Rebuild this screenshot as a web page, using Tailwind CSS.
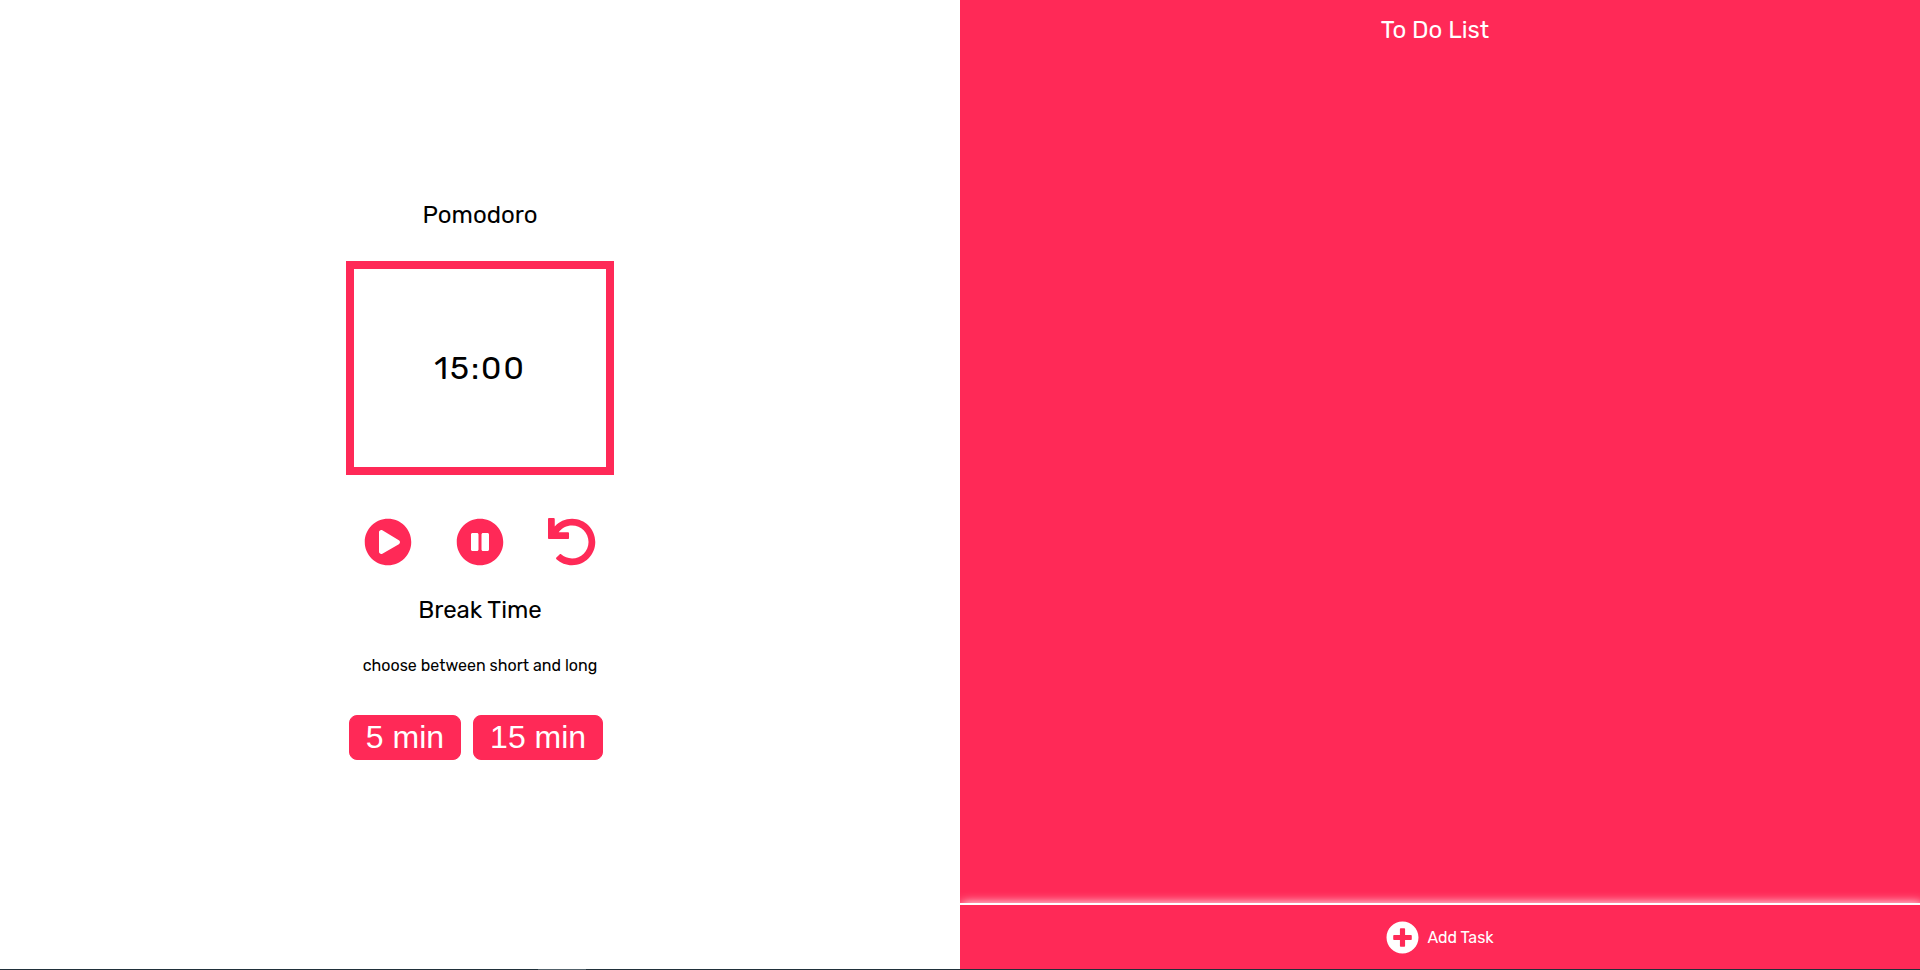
<!DOCTYPE html>
<html lang="en">
<head>
<meta charset="utf-8">
<meta name="viewport" content="width=device-width, initial-scale=1">
<title>Pomodoro</title>
<script src="https://cdn.jsdelivr.net/npm/@tailwindcss/browser@4"></script>
</head>
<body class="flex min-h-screen flex-col bg-white font-['Rubik','Inter',sans-serif] text-black">
  <div class="grid flex-1 grid-cols-2">
    <main class="flex flex-col items-center justify-center pb-2.5">
      <h1 class="text-2xl">Pomodoro</h1>
      <div class="mt-[30px] flex h-[214px] w-[268px] items-center justify-center border-8 border-[#ff2957]">
        <time class="text-[32px] leading-10 tracking-[2px]">15:00</time>
      </div>
      <div class="mt-[43px] flex gap-11 text-[#ff2957]">
        <button type="button" aria-label="Start"><svg class="size-12" viewBox="0 0 512 512" fill="currentColor"><path d="M256 8C119 8 8 119 8 256s111 248 248 248 248-111 248-248S393 8 256 8zm115.7 272l-176 101c-15.8 8.800-35.700-2.500-35.700-21V152c0-18.400 19.800-29.800 35.700-21l176 107c16.400 9.200 16.400 32.900 0 42z"/></svg></button>
        <button type="button" aria-label="Pause"><svg class="size-12" viewBox="0 0 512 512" fill="currentColor"><path d="M256 8C119 8 8 119 8 256s111 248 248 248 248-111 248-248S393 8 256 8zm-16 328c0 8.800-7.200 16-16 16h-48c-8.800 0-16-7.200-16-16V176c0-8.800 7.200-16 16-16h48c8.800 0 16 7.200 16 16v160zm112 0c0 8.800-7.200 16-16 16h-48c-8.800 0-16-7.200-16-16V176c0-8.800 7.200-16 16-16h48c8.800 0 16 7.200 16 16v160z"/></svg></button>
        <button type="button" aria-label="Reset"><svg class="size-12" viewBox="0 0 512 512" fill="currentColor"><path d="M212.333 224.333H12c-6.627 0-12-5.373-12-12V12C0 5.373 5.373 0 12 0h48c6.627 0 12 5.373 12 12v78.112C117.773 39.279 184.260 7.470 258.175 8.007c136.906.994 246.448 111.623 246.157 248.532C504.041 393.258 393.120 504 256.333 504c-64.089 0-122.496-24.313-166.510-64.215-5.099-4.622-5.334-12.554-.467-17.420l33.967-33.967c4.474-4.474 11.662-4.717 16.401-.525C170.760 415.336 211.580 432 256.333 432c97.268 0 176-78.716 176-176 0-97.267-78.716-176-176-176-58.496 0-110.280 28.476-142.274 72.333h98.274c6.627 0 12 5.373 12 12v48c0 6.627-5.373 12-12 12z"/></svg></button>
      </div>
      <h2 class="mt-7 text-2xl">Break Time</h2>
      <p class="mt-7 text-base">choose between short and long</p>
      <div class="mt-[37px] flex gap-3 pr-2 font-['Liberation_Sans',sans-serif] text-[32px] leading-[35px] text-white">
        <button type="button" class="rounded-lg border border-[#ff2957] bg-[#ff2957] px-4 py-1">5 min</button>
        <button type="button" class="rounded-lg border border-[#ff2957] bg-[#ff2957] px-4 py-1">15 min</button>
      </div>
    </main>
    <section class="flex flex-col overflow-hidden bg-[#ff2957] text-white">
      <h2 class="mt-3.5 pr-2.5 text-center text-2xl">To Do List</h2>
      <div class="flex-1"></div>
      <button type="button" class="flex h-[66px] items-center justify-center gap-2 border-t-2 border-white bg-[#ff2957] shadow-[2px_0_10px_white]">
        <svg class="size-[33px]" viewBox="0 0 512 512" fill="currentColor"><path d="M256 8C119 8 8 119 8 256s111 248 248 248 248-111 248-248S393 8 256 8zm144 276c0 6.600-5.400 12-12 12h-92v92c0 6.600-5.400 12-12 12h-56c-6.600 0-12-5.400-12-12v-92h-92c-6.600 0-12-5.400-12-12v-56c0-6.600 5.400-12 12-12h92v-92c0-6.600 5.400-12 12-12h56c6.600 0 12 5.400 12 12v92h92c6.600 0 12 5.400 12 12v56z"/></svg>
        <span class="pt-px text-base">Add Task</span>
      </button>
    </section>
  </div>
  <footer class="flex h-px bg-[#20303a]"><div class="ml-[28%] w-12 bg-[#52616a]"></div></footer>
</body>
</html>
